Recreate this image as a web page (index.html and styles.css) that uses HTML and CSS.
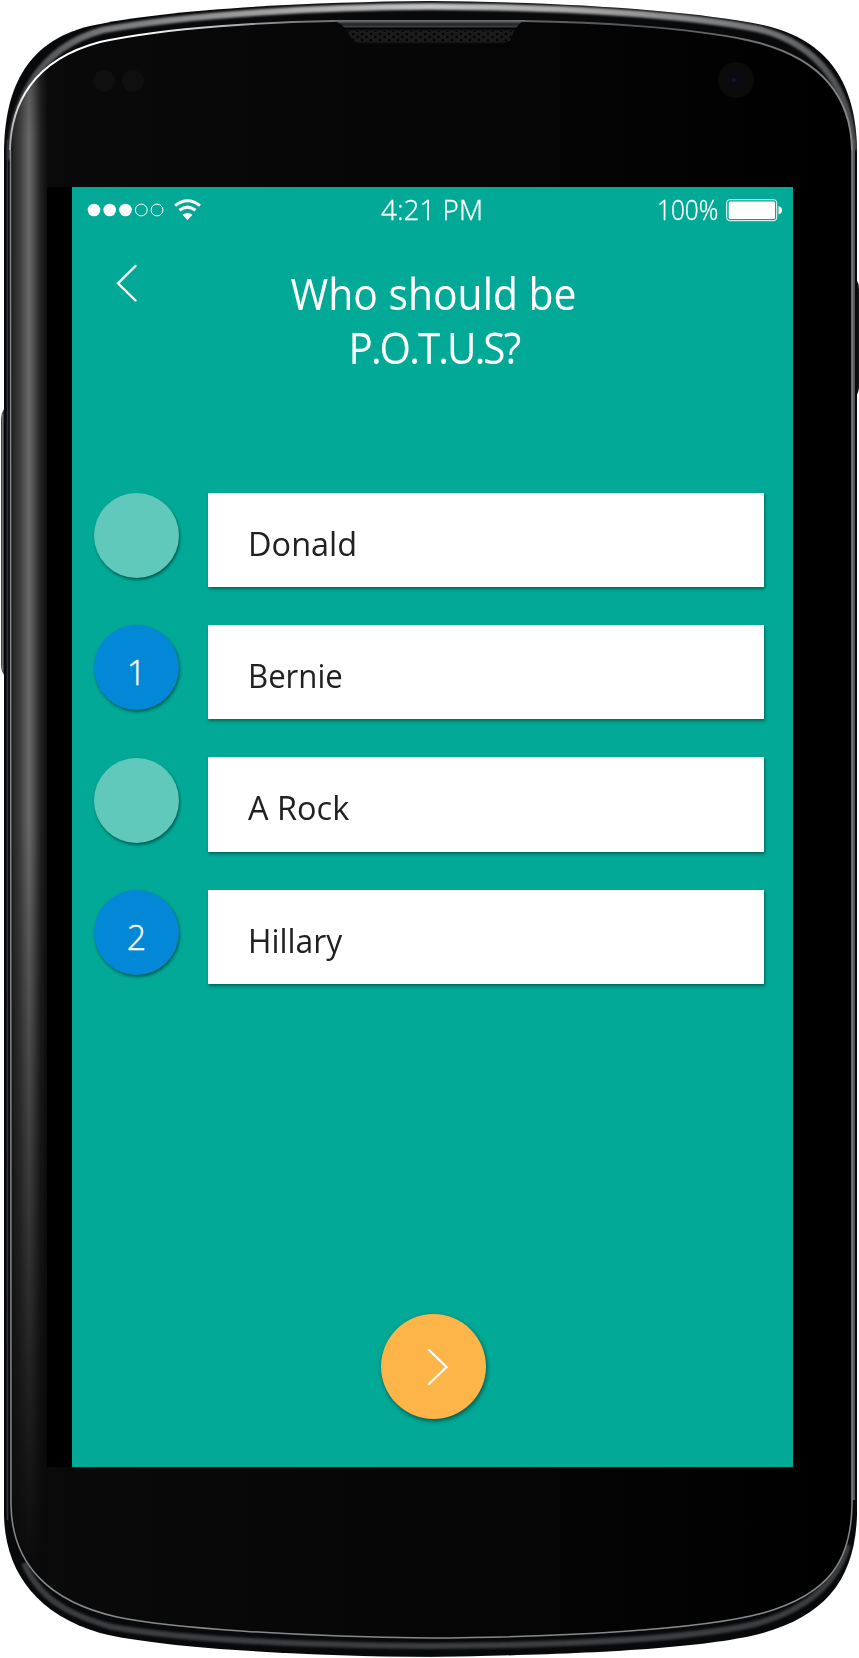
FILE: index.html
```html
<!DOCTYPE html>
<html lang="en">
<head>
<meta charset="utf-8">
<title>Who should be P.O.T.U.S?</title>
<link rel="stylesheet" href="styles.css">
</head>
<body>
<div class="phone">
  <svg class="shell" viewBox="0 0 859 1658" width="859" height="1658" aria-hidden="true">
    <defs>
      <linearGradient id="rim" x1="0" y1="0" x2="859" y2="0" gradientUnits="userSpaceOnUse">
        <stop offset="0" stop-color="#3c3d40"/><stop offset=".12" stop-color="#77787a"/>
        <stop offset=".35" stop-color="#aaa"/><stop offset=".5" stop-color="#c4c4c4"/>
        <stop offset=".7" stop-color="#a0a0a0"/><stop offset=".9" stop-color="#707174"/><stop offset="1" stop-color="#47484b"/>
      </linearGradient>
      <linearGradient id="line" x1="0" y1="0" x2="859" y2="0" gradientUnits="userSpaceOnUse">
        <stop offset="0" stop-color="#777"/><stop offset=".03" stop-color="#fff"/><stop offset=".16" stop-color="#fff"/>
        <stop offset=".35" stop-color="#777"/><stop offset=".75" stop-color="#555"/><stop offset="1" stop-color="#888"/>
      </linearGradient>
      <linearGradient id="edge">
        <stop offset="0" stop-color="#000"/><stop offset=".08" stop-color="#262626"/><stop offset=".25" stop-color="#3b3b3b"/>
        <stop offset=".5" stop-color="#686868"/><stop offset=".62" stop-color="#505050"/><stop offset=".8" stop-color="#222"/><stop offset="1" stop-color="#0a0a0a"/>
      </linearGradient>
      <linearGradient id="fade" x1="0" y1="0" x2="0" y2="1">
        <stop offset="0" stop-color="#090909" stop-opacity="0.2"/><stop offset=".05" stop-color="#090909" stop-opacity="0"/><stop offset=".5" stop-color="#090909" stop-opacity="0"/>
        <stop offset=".85" stop-color="#090909" stop-opacity=".7"/><stop offset="1" stop-color="#090909"/>
      </linearGradient>
      <linearGradient id="glass"><stop offset="0" stop-color="#0a0a0a"/><stop offset=".5" stop-color="#060606"/><stop offset="1" stop-color="#000"/></linearGradient>
      <linearGradient id="lip" x1="0" y1="0" x2="0" y2="1">
        <stop offset="0" stop-color="#777"/><stop offset=".25" stop-color="#555"/><stop offset=".5" stop-color="#202124"/><stop offset="1" stop-color="#4b4c50"/>
      </linearGradient>
      <pattern id="holes" x="351" y="32" width="9" height="6" patternUnits="userSpaceOnUse">
        <rect width="9" height="6" fill="#1b1b1b"/><circle cx="2" cy="2" r="1.2"/><circle cx="6.5" cy="5" r="1.2"/>
      </pattern>
      <filter id="soft"><feGaussianBlur stdDeviation="1"/></filter>
      <clipPath id="face"><path d="M10 150C11 105 32 60 100 42C170 27 270 22 333 21H523C600 22 690 28 747 40C820 56 851 95 852 150V1505C851 1560 830 1594 763 1613C700 1630 560 1637 430 1638C300 1637 170 1628 117 1617C50 1602 12 1565 11 1505Z"/></clipPath>
      <clipPath id="body"><path d="M4 150C5 95 22 42 90 26C160 10 300 2 430 1C560 2 690 10 763 25C830 40 856 85 857 150V1515C855 1580 825 1615 763 1633C700 1650 560 1655 430 1657C300 1656 160 1648 100 1633C35 1614 5 1570 4 1515Z"/></clipPath>
    </defs>
    <path d="M5 408Q1 412 1 420V664Q1 672 5 676Z" fill="#444"/>
    <path d="M2.500 414V670" stroke="#777"/>
    <path d="M856 280Q859 282 859 290V386Q859 393 856 395Z" fill="#111"/>
    <g clip-path="url(#body)">
      <rect width="859" height="1658" fill="#08090b"/>
      <path d="M10 160C11 105 36 48 103 30C190 14 320 7 430 6.500C570 7 690 15 758 29C820 44 850 90 854 150" fill="none" stroke="url(#rim)" stroke-width="6.500" filter="url(#soft)"/>
      <path d="M24 1563C40 1600 70 1615 112 1627C180 1639 300 1645 430 1646C570 1645 690 1639 755 1624C810 1609 838 1580 848 1545" fill="none" stroke="#3b3c3f" stroke-width="6" filter="url(#soft)"/>
      <path d="M7.500 140V1520" stroke="#333438" stroke-width="1.500"/>
      <path d="M853.500 140V1500" stroke="#55565a" stroke-width="3"/>
      <path d="M260 1656Q430 1659 600 1655" stroke="#777" fill="none"/>
    </g>
    <g clip-path="url(#face)">
      <rect width="859" height="1658" fill="url(#glass)"/>
      <rect x="10" y="60" width="38" height="1520" fill="url(#edge)"/>
      <rect x="10" y="60" width="38" height="1520" fill="url(#fade)"/>
      <circle cx="104" cy="81" r="11" fill="#0f0f0f"/><circle cx="133" cy="81" r="11" fill="#0f0f0f"/>
      <circle cx="736" cy="80" r="18" fill="#0b0b0c"/><circle cx="736" cy="80" r="9" fill="#0a0a10"/><circle cx="734" cy="80" r="2" fill="#171724"/>
    </g>
    <path d="M10 150C11 105 32 60 100 42C170 27 270 22 333 21H523C600 22 690 28 747 40C820 56 851 95 852 150" fill="none" stroke="url(#line)" stroke-width="1.900"/>
    <path d="M10.500 150L11 1505C12 1565 50 1602 117 1617C170 1628 300 1637 430 1638C560 1637 700 1630 763 1613C830 1594 851 1560 852 1505V150" fill="none" stroke="#88898b" stroke-width="1.500"/>
    <path d="M330 20H526Q520 22 516 28H345Q338 21 330 20Z" fill="url(#lip)"/>
    <path d="M345 28H516L510 39Q508 43 503 43H359Q354 43 352 39Z" fill="#161616"/>
    <path d="M347 31H514L510 41H353Z" fill="url(#holes)"/>
    <path d="M344 28.500H517" stroke="#000" stroke-width="2"/>
  </svg>

  <div class="bezel">
  <main class="screen">
    <header class="status">
      <svg class="signal" viewBox="0 0 108 24" width="108" height="24" aria-label="Signal and Wi-Fi">
        <g fill="#fff"><circle cx="7" cy="12" r="6.300"/><circle cx="22.700" cy="12" r="6.300"/><circle cx="38.500" cy="12" r="6.300"/></g>
        <g fill="none" stroke="#fff" stroke-width="1"><circle cx="54.300" cy="12" r="5.900"/><circle cx="70" cy="12" r="5.900"/></g>
        <g fill="none" stroke="#fff" stroke-width="3"><path d="M88 7.700Q100.500-2.300 113 7.700M92.500 12.300Q100.500 6 108.500 12.300"/></g>
        <path d="M95.500 16.700Q100.500 13.200 105.500 16.700L100.500 22Z" fill="#fff"/>
      </svg>
      <span class="time"><span class="fit">4:21 PM</span></span>
      <span class="charge"><span class="fit">100%</span></span>
      <svg class="battery" viewBox="0 0 56 23" width="56" height="23" aria-hidden="true">
        <rect x=".7" y=".7" width="50" height="21" rx="3" fill="none" stroke="#fff"/>
        <rect x="2.700" y="2.500" width="46.300" height="17.500" rx="1.500" fill="#fff"/>
        <path d="M52.500 7Q56 8 56 11.300T52.500 15.500Z" fill="#fff"/>
      </svg>
    </header>
    <div class="heading">
      <svg class="back" viewBox="0 0 22 38" width="22" height="38" aria-label="Back"><path d="M19.500 2L2 19.300L19.500 36.500"/></svg>
      <h1><span class="fit l1">Who should be</span><br><span class="fit l2">P.O.T.U.S?</span></h1>
    </div>
    <ul class="options">
      <li><span class="rank"></span><span class="choice"><span class="fit">Donald</span></span></li>
      <li><span class="rank on">1</span><span class="choice"><span class="fit bernie">Bernie</span></span></li>
      <li><span class="rank"></span><span class="choice"><span class="fit">A Rock</span></span></li>
      <li><span class="rank on">2</span><span class="choice"><span class="fit hillary">Hillary</span></span></li>
    </ul>
    <button class="next" aria-label="Next"><svg viewBox="0 0 22 38" width="22" height="38"><path d="M2 2L19.500 19L2 36"/></svg></button>
  </main>
  </div>
</div>
</body>
</html>
```
FILE: styles.css
```css
* { box-sizing: border-box; }
body { margin: 0; background: #fff; font-family: "Open Sans", "Noto Sans", sans-serif; }
.phone { position: relative; width: 859px; height: 1658px; padding: 187px 0 0 47px; overflow: hidden; }
.shell { position: absolute; left: 0; top: 0; }
.bezel { position: relative; width: 769px; height: 1280px; padding: 0 23px 0 25px; background: #000; }
.screen { display: flex; flex-direction: column; height: 1280px; background: #02a996; color: #fff; }
.fit { display: inline-block; white-space: nowrap; transform-origin: left center; }

.status { display: flex; height: 58px; padding: 11px 10px 0 15px; font-size: 28px; font-weight: 300; line-height: 23px; -webkit-text-stroke: .35px #fff; }
.signal { overflow: visible; flex: none; }
.time { width: 277px; padding-left: 186px; flex: none; }
.time .fit { transform: scaleX(.995); }
.charge { width: 69px; margin-left: 185px; flex: none; }
.charge .fit { transform: scaleX(.87); }
.battery { flex: none; margin-top: .5px; }

.heading { display: flex; height: 247.500px; padding: 19px 0 0 43.500px; }
.back { flex: none; }
.back, .next svg { fill: none; stroke: #fff; stroke-width: 2.400; stroke-linecap: round; }
h1 { width: 592px; margin: 3px 0 0; font-size: 43px; font-weight: 400; line-height: 54px; text-align: center; }
h1 .fit { transform-origin: center; }
.l1 { transform: scaleX(.95); }
.l2 { letter-spacing: -2px; transform: scaleX(.94); }

.options { display: flex; flex-direction: column; gap: 38px; margin: 0; padding: 0 0 0 22px; list-style: none; }
.options li { display: flex; gap: 28.500px; height: 94.400px; }
.rank { width: 85px; height: 85px; margin-top: .5px; border-radius: 50%; background: #60c9bc; box-shadow: 1px 2px 3px rgba(0,0,0,.45); font-size: 34px; font-weight: 300; line-height: 94px; text-align: center; -webkit-text-stroke: .4px #fff; }
.rank.on { background: #0288d6; }
.choice { width: 556.500px; padding-left: 40px; background: #fff; box-shadow: 1px 2px 3px rgba(0,0,0,.4); color: #212121; font-size: 33.500px; line-height: 101px; }
.choice .fit { transform: scaleX(.97); }
.choice .bernie { transform: scaleX(.93); }
.choice .hillary { transform: scaleX(.95); }

.next { display: flex; align-items: center; justify-content: center; width: 105px; height: 105px; margin: 330px 0 0 309px; padding: 0 0 0 8px; border: 0; border-radius: 50%; background: #fdb449; box-shadow: 1px 2px 4px rgba(0,0,0,.5); }
```
